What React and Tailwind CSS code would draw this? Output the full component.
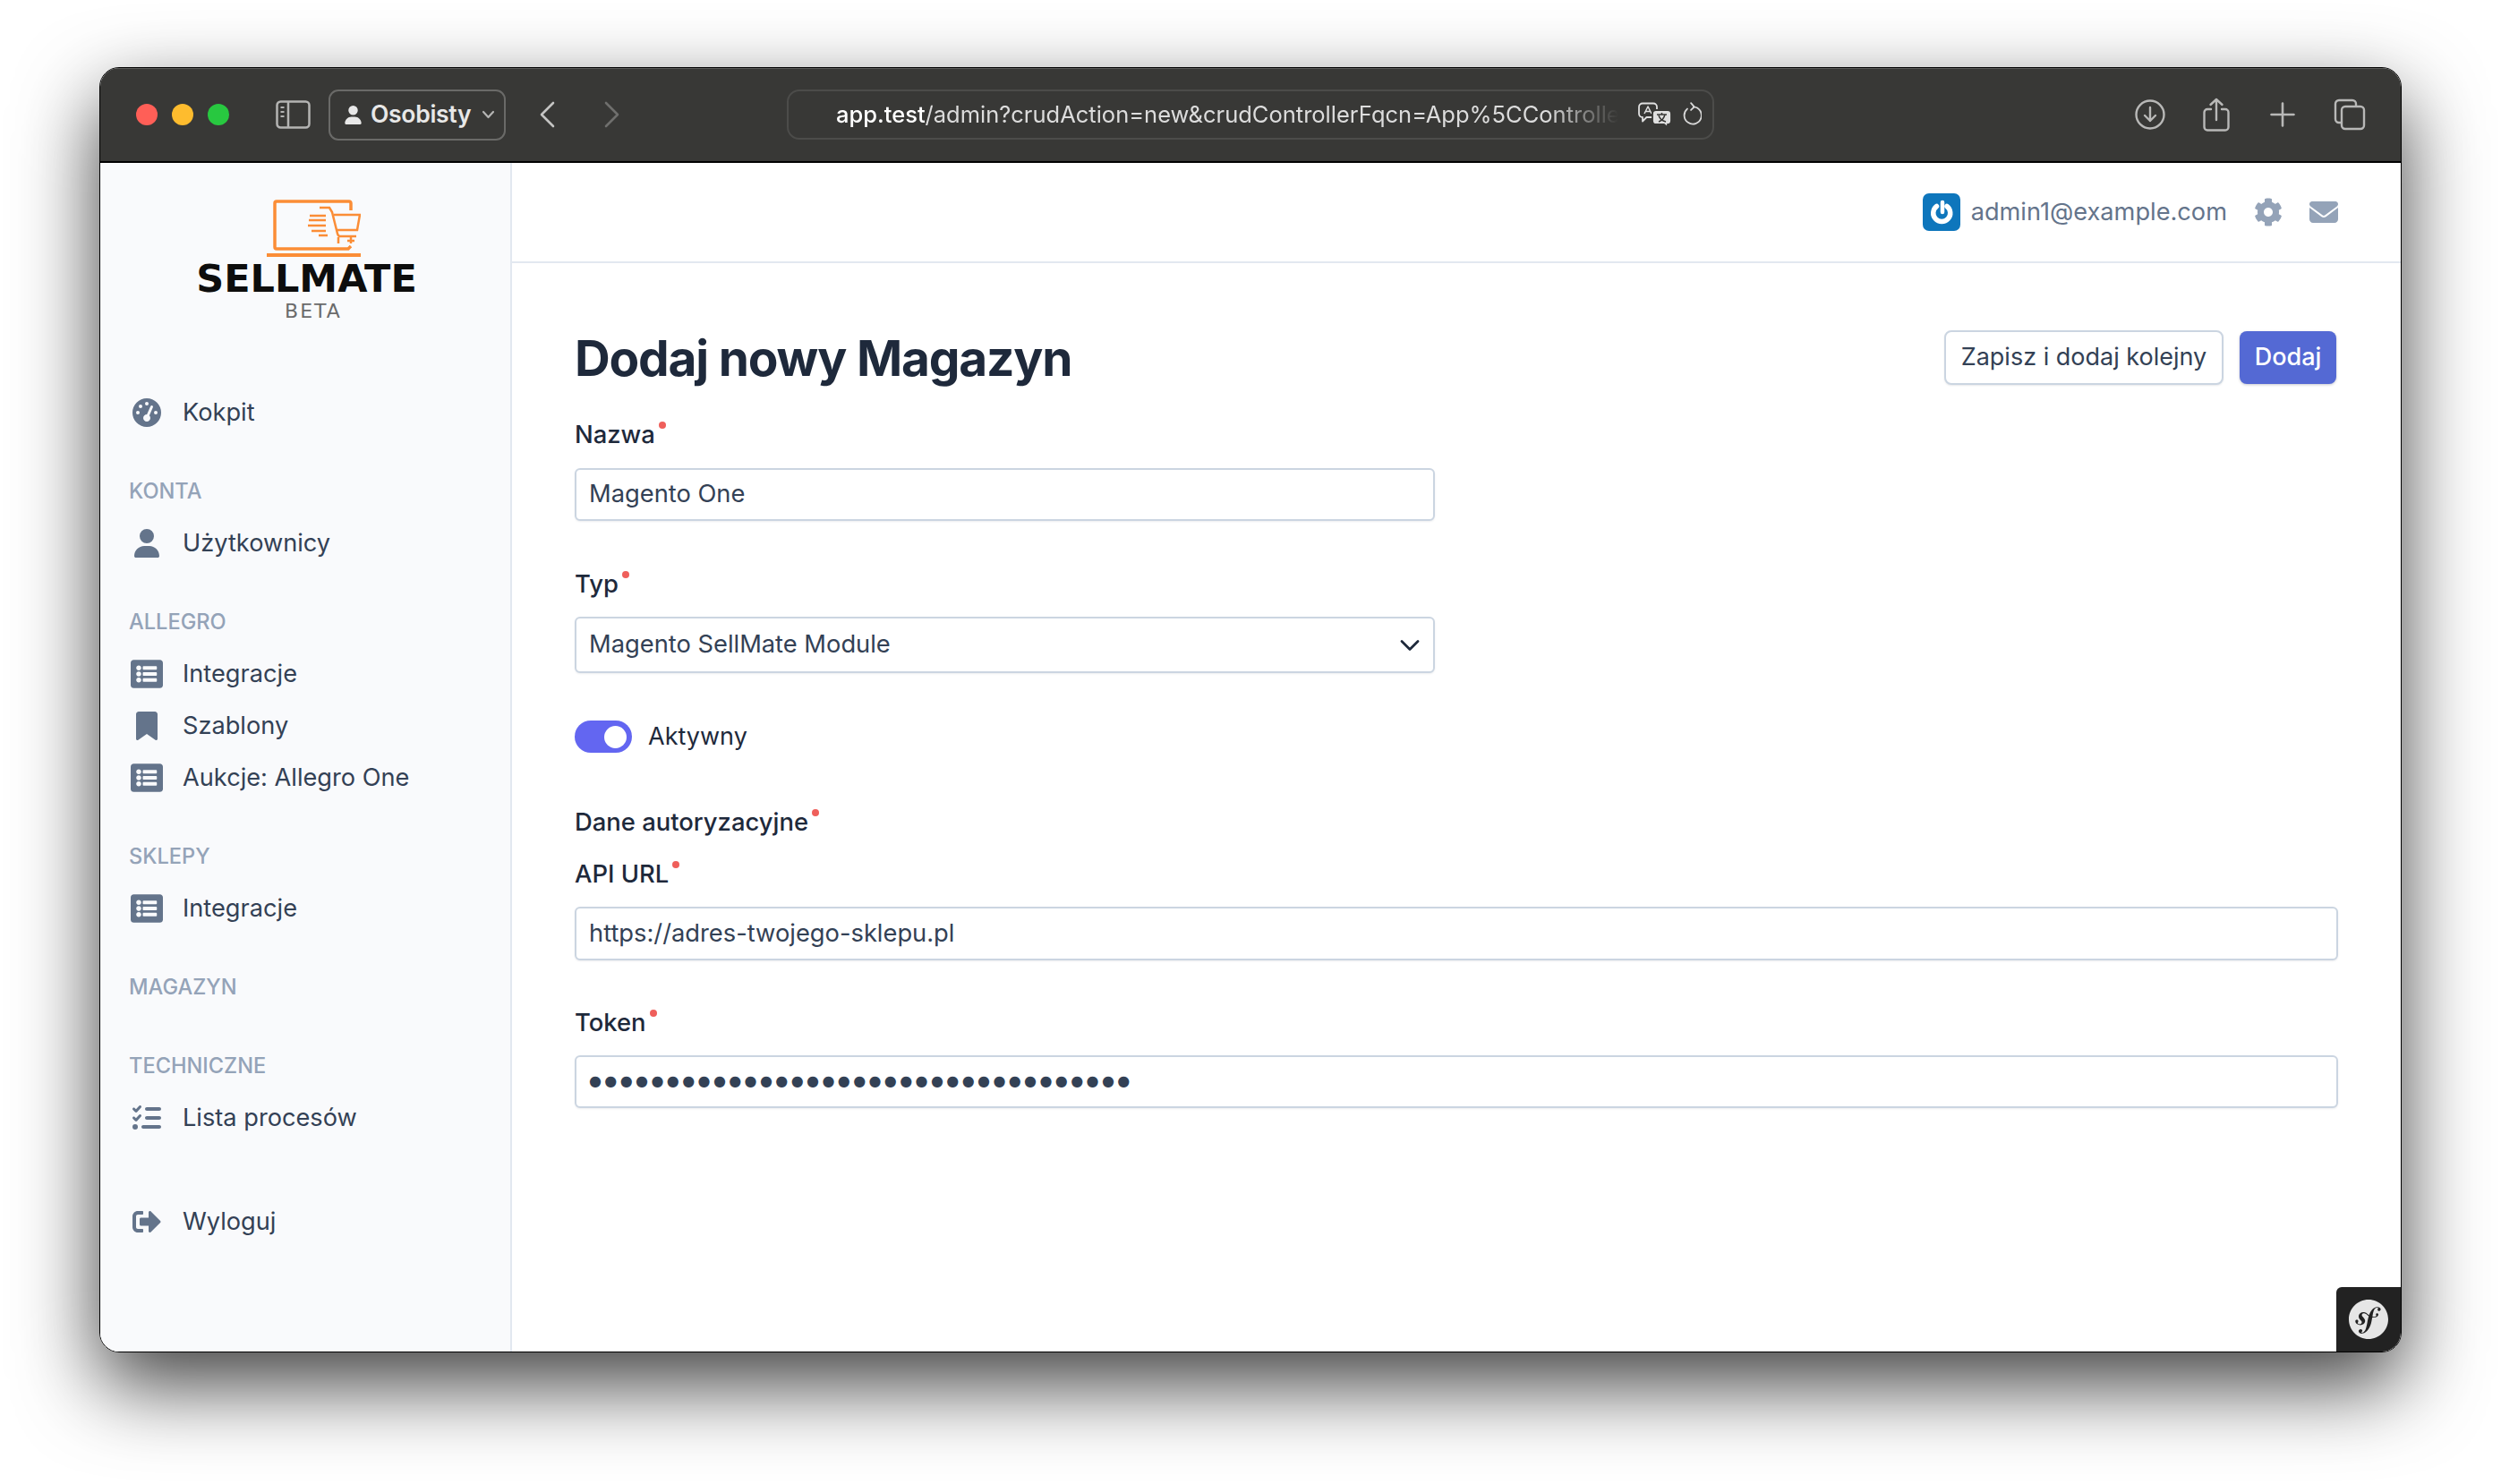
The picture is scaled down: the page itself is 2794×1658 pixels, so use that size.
import { FaGaugeHigh, FaUser, FaBookmark, FaListCheck, FaEnvelope } from 'react-icons/fa6'
import { FaListAlt, FaSignOutAlt, FaCog } from 'react-icons/fa'
import { SiSymfony } from 'react-icons/si'

const nav = [
  { items: [{ icon: FaGaugeHigh, label: 'Kokpit', size: 'size-8' }] },
  { title: 'KONTA', items: [{ icon: FaUser, label: 'Użytkownicy', size: 'size-8' }] },
  {
    title: 'ALLEGRO',
    items: [
      { icon: FaListAlt, label: 'Integracje', size: 'size-[36px]' },
      { icon: FaBookmark, label: 'Szablony', size: 'size-8' },
      { icon: FaListAlt, label: 'Aukcje: Allegro One', size: 'size-[36px]' },
    ],
  },
  { title: 'SKLEPY', items: [{ icon: FaListAlt, label: 'Integracje', size: 'size-[36px]' }] },
  { title: 'MAGAZYN', items: [] },
  { title: 'TECHNICZNE', items: [{ icon: FaListCheck, label: 'Lista procesów', size: 'size-8' }] },
  { spacer: true, items: [{ icon: FaSignOutAlt, label: 'Wyloguj', size: 'size-8' }] },
]

function Logo() {
  return (
    <div className="flex h-[250px] flex-col items-center pt-[41px]">
      <svg className="ml-[18px] h-[64px] w-[105px]" viewBox="0 0 105 64" fill="none" stroke="#fb8d36" strokeWidth="3.5">
        <path d="M94 12V4a2 2 0 0 0-2-2H11a2 2 0 0 0-2 2v49a2 2 0 0 0 2 2h80l3-3" />
        <path d="M0 62h105" strokeWidth="4" />
        <path d="M59 9h11l3 5 6 24c.5 2 1.5 3 3 3h18M75 17h29l-3 17H79M48 18h18M47 23h19M46 29h20M50 35h16M58 40h10M80 42v7M94 42v7M90 46h8" strokeWidth="2.5" />
      </svg>
      <div className="mt-[6px] ml-[3px] font-['DejaVu_Sans'] text-[43px] leading-[36px] font-bold text-[#0d0d0d]">SELLMATE</div>
      <div className="mt-[8px] ml-[18px] font-['DejaVu_Sans'] text-[22px] leading-[22px] tracking-[2px] text-[#6b6b6b]">BETA</div>
    </div>
  )
}

function Sidebar() {
  return (
    <aside className="w-[460px] shrink-0 border-r-2 border-[#e2e8f0] bg-[#f9fafc]">
      <Logo />
      {nav.map((section, i) => (
        <div key={i} className={section.spacer ? 'mt-[58px]' : i > 0 ? 'mt-[30px]' : ''}>
          {section.title && (
            <div className="flex h-[58px] items-center pl-[32px] text-[23.6px] font-medium text-[#94a3b8]">{section.title}</div>
          )}
          {section.items.map((item) => (
            <div key={item.label + i} className="flex h-[58px] items-center gap-[21px] pl-[33px] text-[27.2px] text-[#334155]">
              <span className="flex w-[38px] justify-center text-[#64748b]">
                <item.icon className={item.size} />
              </span>
              {item.label}
            </div>
          ))}
        </div>
      ))}
    </aside>
  )
}

function Toolbar() {
  return (
    <div className="flex h-[106px] shrink-0 items-center border-b-2 border-black bg-[#383836] text-[#e8e8e8] shadow-[inset_0_1px_0_#5c5c5a]">
      <div className="ml-[40px] flex gap-[16px]">
        <span className="size-6 rounded-full bg-[#ff5f57]" />
        <span className="size-6 rounded-full bg-[#febc2e]" />
        <span className="size-6 rounded-full bg-[#28c840]" />
      </div>
      <svg className="ml-[52px] h-[32px] w-[39px]" viewBox="0 0 39 32" fill="none" stroke="#b4b4b3" strokeWidth="2.5">
        <rect x="1.5" y="1.5" width="36" height="29" rx="4" />
        <path d="M14 2v28" />
        <path d="M5.5 8h4M5.5 13h4M5.5 18h4" strokeWidth="2" />
      </svg>
      <div className="ml-[20px] flex h-[57px] w-[198px] items-center rounded-[11px] border-2 border-[#6a6a68] pl-[15px]">
        <FaUser className="size-[21px] text-[#e8e8e8]" />
        <span className="ml-[9px] text-[26.5px] font-semibold tracking-[-0.3px]">Osobisty</span>
        <svg className="ml-[12px] h-[10px] w-[15px]" viewBox="0 0 15 10" fill="none" stroke="#b4b4b3" strokeWidth="2.2" strokeLinecap="round" strokeLinejoin="round">
          <path d="M2 2l5.5 6L13 2" />
        </svg>
      </div>
      <svg className="ml-[37px] h-[30px] w-[18px]" viewBox="0 0 18 30" fill="none" stroke="#c4c4c3" strokeWidth="2.6" strokeLinecap="round" strokeLinejoin="round">
        <path d="M16 2L3 15l13 13" />
      </svg>
      <svg className="ml-[55px] h-[30px] w-[18px]" viewBox="0 0 18 30" fill="none" stroke="#6f6f6d" strokeWidth="2.6" strokeLinecap="round" strokeLinejoin="round">
        <path d="M2 2l13 13L2 28" />
      </svg>
      <div className="ml-[186px] flex h-[56px] w-[1036px] items-center rounded-[14px] border-2 border-[#4c4c4a] pl-[53px]">
        <div className="w-[874px] text-[25.5px] whitespace-nowrap text-[#dcdcdc] [mask-image:linear-gradient(to_right,black_91%,transparent)]">
          <span className="font-medium text-white">app.test</span>/admin?crudAction=new&amp;crudControllerFqcn=App%5CControlle
        </div>
        <svg className="ml-[22px] h-[29px] w-[38px]" viewBox="0 0 38 29" fill="none" stroke="#e0e0e0" strokeWidth="1.8" strokeLinejoin="round">
          <path d="M5 1.5h12a4 4 0 0 1 4 4V13a4 4 0 0 1-4 4H9.5L5 21.5V17a4 4 0 0 1-4-4V5.5a4 4 0 0 1 4-4z" />
          <path d="M7 13l4-8 4 8M8.5 10.5h5" strokeWidth="1.5" />
          <path d="M20 9h13a4 4 0 0 1 4 4v8a4 4 0 0 1-4 4v3.5L29 25h-9a4 4 0 0 1-4-4v-8a4 4 0 0 1 4-4z" fill="#e0e0e0" stroke="#383836" />
          <path d="M21 14h11M26.5 12v2M23 22c3-1 6-4 7-8M23 15c1 3 4 6 8 7" stroke="#383836" strokeWidth="1.5" />
        </svg>
        <svg className="ml-[11px] h-[30px] w-[22px]" viewBox="0 0 24 30" fill="none" stroke="#d8d8d8" strokeWidth="2" strokeLinecap="round" strokeLinejoin="round">
          <path d="M14 5.5a10.5 10.5 0 1 1-7.5 2.5" />
          <path d="M11 1l4 4.5-4 4" />
        </svg>
      </div>
      <svg className="ml-[470px] size-[34px]" viewBox="0 0 34 34" fill="none" stroke="#b8b8b7" strokeWidth="2.4" strokeLinecap="round" strokeLinejoin="round">
        <circle cx="17" cy="17" r="15.5" />
        <path d="M17 9v15M11 18l6 6 6-6" />
      </svg>
      <svg className="ml-[42px] h-[38px] w-[30px]" viewBox="0 0 30 38" fill="none" stroke="#b8b8b7" strokeWidth="2.4" strokeLinecap="round" strokeLinejoin="round">
        <path d="M9 13H5a3.5 3.5 0 0 0-3.5 3.5V33A3.5 3.5 0 0 0 5 36.5h20a3.5 3.5 0 0 0 3.5-3.5V16.5A3.5 3.5 0 0 0 25 13h-4" />
        <path d="M15 25V2M8.5 8L15 2l6.5 6" />
      </svg>
      <svg className="ml-[45px] size-[28px]" viewBox="0 0 28 28" fill="none" stroke="#b8b8b7" strokeWidth="2.6" strokeLinecap="round">
        <path d="M14 1.5v25M1.5 14h25" />
      </svg>
      <svg className="ml-[43px] size-[36px]" viewBox="0 0 36 36" fill="none" stroke="#b8b8b7" strokeWidth="2.4" strokeLinejoin="round">
        <path d="M8 27H6a4 4 0 0 1-4-4V6a4 4 0 0 1 4-4h15a4 4 0 0 1 4 4v2" />
        <rect x="9" y="9" width="25" height="25" rx="4" />
      </svg>
    </div>
  )
}

function Label({ children, className = '' }) {
  return (
    <div className={`relative flex h-[34px] w-fit items-center text-[27.4px] font-medium text-[#1e293b] ${className}`}>
      {children}
      <span className="absolute top-[2px] -right-[12px] size-2 rounded-full bg-[#ef5f5b]" />
    </div>
  )
}

function Field({ children, className = '' }) {
  return (
    <div className={`flex items-center rounded-[6px] border-2 border-[#cbd5e1] bg-white px-[14px] text-[27.3px] text-[#334155] shadow-[0_1px_2px_rgba(30,41,59,0.08)] ${className}`}>
      {children}
    </div>
  )
}

function Form() {
  return (
    <main className="relative min-w-0 flex-1 bg-white">
      <header className="flex h-[112px] items-center justify-end gap-[12px] border-b-2 border-[#e2e8f0] pr-[70px]">
        <div className="flex size-[42px] items-center justify-center rounded-[7px] bg-[#0e76bc]">
          <svg className="size-[32px]" viewBox="0 0 32 32" fill="none" stroke="white" strokeLinecap="round">
            <path d="M10.5 9.5a9.5 9.5 0 1 0 11.5 0" strokeWidth="5.5" />
            <path d="M17 5v11" strokeWidth="4.5" />
          </svg>
        </div>
        <span className="text-[27.2px] text-[#64748b]">admin1@example.com</span>
        <FaCog className="ml-[18px] size-8 text-[#94a3b8]" />
        <FaEnvelope className="ml-[18px] size-8 text-[#94a3b8]" />
      </header>
      <div className="px-[70px] pt-[75px]">
        <div className="flex h-[61px] items-center justify-between">
          <h1 className="mt-[2px] text-[55px] font-bold tracking-[-1.2px] text-[#1e293b]">Dodaj nowy Magazyn</h1>
          <div className="mr-[2px] flex items-center gap-[18px]">
            <button className="h-[61px] w-[312px] rounded-[8px] border-2 border-[#cbd5e1] bg-white text-[27px] text-[#334155] shadow-[0_1px_2px_rgba(30,41,59,0.1)]">
              Zapisz i dodaj kolejny
            </button>
            <button className="h-[59px] w-[108px] rounded-[8px] bg-[#5469d4] text-[27px] font-medium text-white shadow-[0_1px_3px_rgba(30,41,59,0.25)]">
              Dodaj
            </button>
          </div>
        </div>

        <Label className="mt-[39px]">Nazwa</Label>
        <Field className="mt-[20px] h-[59px] w-[961px]">Magento One</Field>

        <Label className="mt-[54px]">Typ</Label>
        <Field className="mt-[19px] h-[63px] w-[961px] justify-between pr-[15px]">
          Magento SellMate Module
          <svg className="h-[14px] w-[22px]" viewBox="0 0 22 14" fill="none" stroke="#1e293b" strokeWidth="2.8" strokeLinecap="round" strokeLinejoin="round">
            <path d="M2 2.5l9 9 9-9" />
          </svg>
        </Field>

        <div className="mt-[53px] flex h-[36px] items-center gap-[18px]">
          <div className="flex h-[36px] w-[64px] items-center justify-end rounded-full bg-[#6366f1] pr-[6px]">
            <span className="size-[25px] rounded-full bg-white" />
          </div>
          <span className="text-[27px] text-[#1e293b]">Aktywny</span>
        </div>

        <Label className="mt-[61px]">Dane autoryzacyjne</Label>
        <Label className="mt-[24px]">API URL</Label>
        <Field className="mt-[19px] h-[60px]">https://adres-twojego-sklepu.pl</Field>

        <Label className="mt-[53px]">Token</Label>
        <Field className="mt-[19px] h-[59px]">
          <span className="-mt-[2px] font-['DejaVu_Sans'] text-[16px] leading-none tracking-[3.4px] text-[#334155]">{'●'.repeat(35)}</span>
        </Field>
      </div>
      <div className="absolute right-0 bottom-0 flex h-[72px] w-[72px] items-center justify-center rounded-tl-[6px] bg-[#222222]">
        <SiSymfony className="size-[44px] text-[#e6e6e6]" />
      </div>
    </main>
  )
}

export default function App() {
  return (
    <div className="h-[1658px] w-[2794px] overflow-hidden bg-white pt-[75px] pl-[111px] font-[Inter,sans-serif]">
      <div className="flex h-[1436px] w-[2572px] flex-col overflow-hidden rounded-[22px] border border-black shadow-[0_36px_90px_rgba(0,0,0,0.75)]">
        <Toolbar />
        <div className="flex min-h-0 flex-1">
          <Sidebar />
          <Form />
        </div>
      </div>
    </div>
  )
}
